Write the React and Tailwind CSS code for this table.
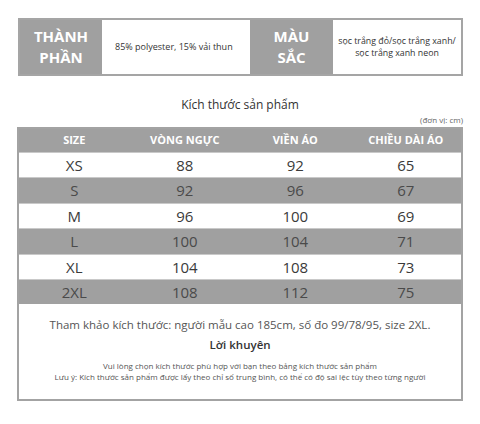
export default function App() {
  const rows = [
    ["XS", "88", "92", "65"],
    ["S", "92", "96", "67"],
    ["M", "96", "100", "69"],
    ["L", "100", "104", "71"],
    ["XL", "104", "108", "73"],
    ["2XL", "108", "112", "75"],
  ];
  const font = { fontFamily: '"Open Sans", "Noto Sans", sans-serif' };
  return (
    <div className="w-[480px] h-[424px] bg-white flex flex-col" style={font}>
      <div className="ml-[18px] mt-[18px] w-[445px] h-[58px] border-2 border-[#a5a5a5] flex">
        <div className="w-[82px] bg-[#a0a0a0] flex flex-col items-center justify-center text-white font-bold text-[15px] leading-[21px]">
          <span>THÀNH</span>
          <span>PHẦN</span>
        </div>
        <div className="w-[148px] bg-white flex items-center pl-[13px] text-[9px] text-[#333]">
          85% polyester, 15% vải thun
        </div>
        <div className="w-[83px] bg-[#a0a0a0] flex flex-col items-center justify-center text-white font-bold text-[15px] leading-[21px]">
          <span>MÀU</span>
          <span>SẮC</span>
        </div>
        <div className="flex-1 bg-white flex flex-col items-center justify-center text-[8.8px] leading-[12px] text-[#333]">
          <span>sọc trắng đỏ/sọc trắng xanh/</span>
          <span>sọc trắng xanh neon</span>
        </div>
      </div>
      <div className="mt-[20px] text-center text-[12px] leading-[17px] text-[#333]">
        Kích thước sản phẩm
      </div>
      <div className="mt-[1px] w-[463px] text-right text-[8px] leading-[11px] text-[#666]">
        (đơn vị: cm)
      </div>
      <div className="mt-[2px] ml-[17px] w-[446px] h-[274px] border-2 border-[#a3a3a3] flex flex-col">
        <div className="h-[23px] bg-[#a0a0a0] grid grid-cols-4 items-center text-white font-bold text-[11px]">
          <span className="text-center">SIZE</span>
          <span className="text-center">VÒNG NGỰC</span>
          <span className="text-center">VIỀN ÁO</span>
          <span className="text-center">CHIỀU DÀI ÁO</span>
        </div>
        {rows.map((r, i) => (
          <div
            key={r[0]}
            className={
              i % 2 === 0
                ? "h-[25.4px] bg-white grid grid-cols-4 items-center text-[15px] text-[#3a3a3a] border-t border-[#c9c9c9]"
                : "h-[25.4px] bg-[#a0a0a0] grid grid-cols-4 items-center text-[15px] text-[#4a4a4a] border-t border-[#c9c9c9]"
            }
          >
            <span className="text-center">{r[0]}</span>
            <span className="text-center">{r[1]}</span>
            <span className="text-center">{r[2]}</span>
            <span className="text-center">{r[3]}</span>
          </div>
        ))}
        <div className="mt-[12px] text-center text-[11.5px] leading-[17px] text-[#555]">
          Tham khảo kích thước: người mẫu cao 185cm, số đo 99/78/95, size 2XL.
        </div>
        <div className="mt-[4px] text-center text-[11.5px] leading-[16px] font-semibold text-[#333]">
          Lời khuyên
        </div>
        <div className="mt-[7px] text-center text-[8px] leading-[11px] text-[#555]">
          <div>Vui lòng chọn kích thước phù hợp với bạn theo bảng kích thước sản phẩm</div>
          <div>Lưu ý: Kích thước sản phẩm được lấy theo chỉ số trung bình, có thể có độ sai lệc tùy theo từng người</div>
        </div>
      </div>
    </div>
  );
}
